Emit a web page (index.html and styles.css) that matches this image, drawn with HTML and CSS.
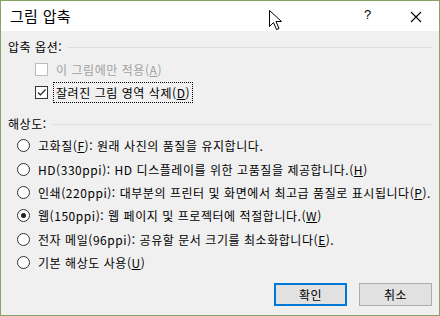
FILE: index.html
```html
<!DOCTYPE html>
<html lang="ko">
<head>
<meta charset="utf-8">
<link rel="stylesheet" href="styles.css">
</head>
<body>
<div class="window">
  <div class="titlebar">
    <span class="title">그림 압축</span>
    <span class="help">?</span>
    <svg class="close" width="12" height="12" viewBox="0 0 12 12"><path d="M1 1L11 11M11 1L1 11" stroke="#000" stroke-width="1.1"/></svg>
    <svg class="cursor" width="14" height="21" viewBox="0 0 14 21"><path d="M0.5 0.5V16.5L4.5 12.5L7.5 19.5L10 18.5L7 11.5H12.5Z" fill="#fff" stroke="#000" stroke-width="1" stroke-linejoin="miter"/></svg>
  </div>
  <div class="content">
    <div class="group-head g1"><span>압축 옵션:</span><i class="rule"></i></div>
    <div class="crow disabled"><span class="cbox"></span><span class="lbl">이 그림에만 적용(<u>A</u>)</span></div>
    <div class="crow"><span class="cbox checked"><svg width="11" height="11" viewBox="0 0 11 11"><path d="M2 5.5L4.5 8L9.5 2.5" fill="none" stroke="#222" stroke-width="1.2"/></svg></span><span class="lbl focus">잘려진 그림 영역 삭제(<u>D</u>)</span></div>
    <div class="group-head g2"><span>해상도:</span><i class="rule"></i></div>
    <div class="radios">
      <div class="rrow"><span class="radio"></span><span>고화질(<u>F</u>): 원래 사진의 품질을 유지합니다.</span></div>
      <div class="rrow"><span class="radio"></span><span>HD(330ppi): HD 디스플레이를 위한 고품질을 제공합니다.(<u>H</u>)</span></div>
      <div class="rrow"><span class="radio"></span><span>인쇄(220ppi): 대부분의 프린터 및 화면에서 최고급 품질로 표시됩니다(<u>P</u>).</span></div>
      <div class="rrow"><span class="radio on"></span><span>웹(150ppi): 웹 페이지 및 프로젝터에 적절합니다.(<u>W</u>)</span></div>
      <div class="rrow"><span class="radio"></span><span>전자 메일(96ppi): 공유할 문서 크기를 최소화합니다(<u>E</u>).</span></div>
      <div class="rrow"><span class="radio"></span><span>기본 해상도 사용(<u>U</u>)</span></div>
    </div>
    <div class="buttons">
      <button class="btn default">확인</button>
      <button class="btn">취소</button>
    </div>
  </div>
</div>
</body>
</html>
```
FILE: styles.css
```css
html, body {
  margin: 0;
  padding: 0;
  width: 440px;
  height: 316px;
  overflow: hidden;
  background: #f0f0f0;
}
body {
  font-family: "Noto Sans CJK KR", "Noto Sans", sans-serif;
  font-size: 12px;
  color: #000;
}
.window {
  box-sizing: border-box;
  width: 440px;
  height: 316px;
  border: 1px solid #83a463;
  display: flex;
  flex-direction: column;
  background: #f0f0f0;
}
.titlebar {
  position: relative;
  height: 30px;
  background: #fff;
  display: flex;
  align-items: center;
  flex-shrink: 0;
}
.title {
  font-size: 15px;
  margin-left: 9px;
  line-height: 20px;
  letter-spacing: 0.3px;
}
.help {
  position: absolute;
  left: 363px;
  top: 6px;
  font-family: "Liberation Sans", sans-serif;
  font-size: 13px;
}
.close {
  position: absolute;
  left: 409px;
  top: 10px;
}
.cursor {
  position: absolute;
  left: 268px;
  top: 9px;
}
.content {
  flex: 1;
  display: flex;
  flex-direction: column;
  padding: 0 7px 0 7px;
  letter-spacing: 0.55px;
}
.group-head {
  display: flex;
  align-items: center;
  height: 16px;
  line-height: 16px;
  color: #000;
}
.group-head span { margin-right: 6px; white-space: nowrap; }
.group-head .rule {
  flex: 1;
  height: 1px;
  background: #dcdcdc;
}
.g1 { margin-top: 8px; }
.g2 { margin-top: 12px; }
.crow {
  display: flex;
  align-items: center;
  height: 23px;
  padding-left: 27px;
}
.g1 + .crow { margin-top: 3px; }
.cbox {
  box-sizing: border-box;
  width: 13px;
  height: 13px;
  border: 1px solid #333;
  background: #fff;
  display: flex;
  align-items: center;
  justify-content: center;
  margin-right: 8px;
  flex-shrink: 0;
}
.disabled .cbox { border-color: #bcbcbc; }
.disabled .lbl { color: #a0a0a0; }
.lbl { line-height: 17px; padding: 1px 2px 1px 2px; white-space: nowrap; }
.lbl.focus { outline: 1px dotted #000; outline-offset: 0; margin-left: -2px; padding-left: 2px; }
.disabled .lbl { margin-left: -2px; }
.radios { margin-top: 2px; display: flex; flex-direction: column; }
.rrow {
  display: flex;
  align-items: center;
  height: 23.4px;
  padding-left: 9px;
  white-space: nowrap;
}
.radio {
  box-sizing: border-box;
  width: 13px;
  height: 13px;
  border: 1px solid #333;
  border-radius: 50%;
  background: #fff;
  margin-right: 8px;
  display: flex;
  align-items: center;
  justify-content: center;
  flex-shrink: 0;
}
.radio.on::after {
  content: "";
  width: 5px;
  height: 5px;
  border-radius: 50%;
  background: #222;
}
.buttons {
  display: flex;
  justify-content: flex-end;
  gap: 12px;
  margin-top: auto;
  margin-bottom: 9px;
}
.btn {
  box-sizing: border-box;
  width: 73px;
  height: 23px;
  border: 1px solid #adadad;
  background: #e1e1e1;
  font-family: "Noto Sans CJK KR", sans-serif;
  font-size: 12px;
  letter-spacing: 0.5px;
  color: #000;
  padding: 0;
  line-height: 19px;
}
.btn.default { border: 2px solid #0078d7; }
u { text-decoration: underline; text-underline-offset: 1px; }
```
